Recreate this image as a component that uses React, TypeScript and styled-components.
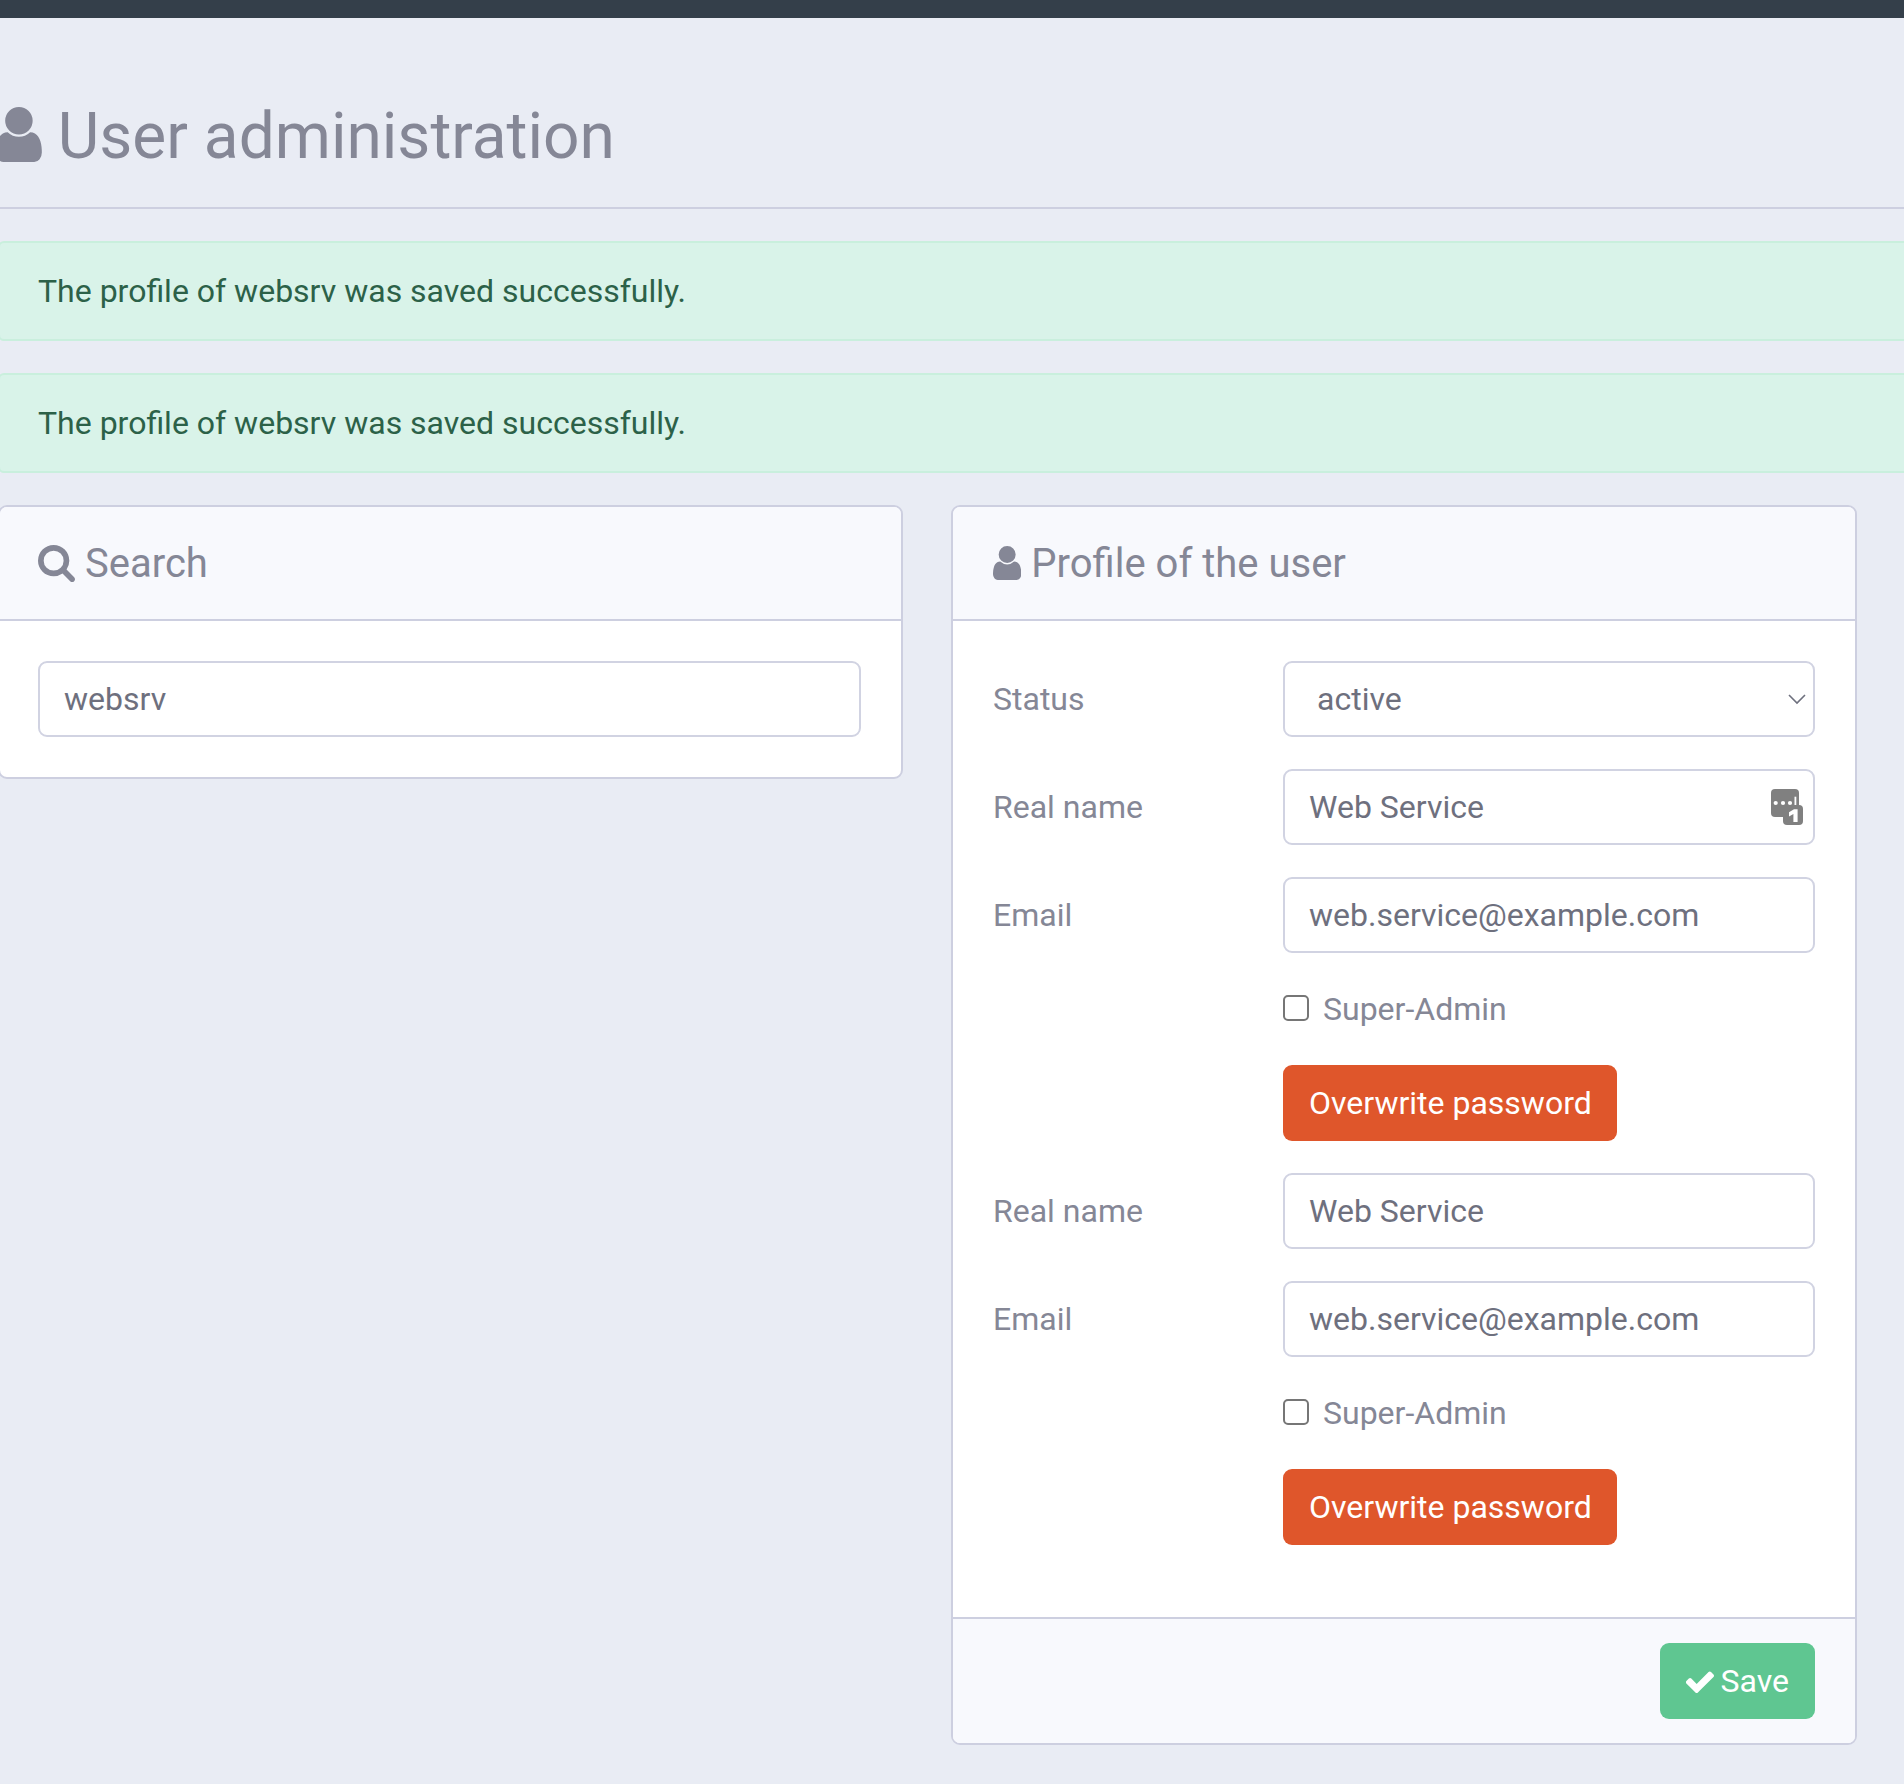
import React from "react";
import styled, { createGlobalStyle } from "styled-components";

const Global = createGlobalStyle`
  html, body { margin: 0; padding: 0; background: #e9ecf4; }
  body { font-family: Roboto, "Liberation Sans", sans-serif; overflow-x: hidden; }
  * { box-sizing: border-box; }
`;

const Page = styled.div`
  width: 1904px;
  height: 1784px;
  overflow: hidden;
  background: #e9ecf4;
`;

const TopBar = styled.div`
  height: 18px;
  background: #343f4a;
`;

const Main = styled.main`
  margin-left: -2px;
  width: 1930px;
`;

const TitleBlock = styled.header`
  height: 191px;
  padding: 88px 0 0;
  border-bottom: 2px solid #cdcfe0;
  display: flex;
  align-items: flex-start;
`;

const Title = styled.h1`
  margin: 0 0 0 -2px;
  display: flex;
  align-items: center;
  gap: 16px;
  height: 56px;
  font-size: 64px;
  line-height: 60px;
  font-weight: 400;
  color: #858796;
`;

const TitleText = styled.span`
  padding-top: 5px;
`;

const Alert = styled.div`
  margin-top: 32px;
  height: 100px;
  padding: 0 0 0 38px;
  display: flex;
  align-items: center;
  background: #d9f3e9;
  border: 2px solid #c9efdd;
  border-radius: 6px;
  color: #2c6148;
  font-size: 32px;
`;

const Columns = styled.div`
  margin-top: 32px;
  width: 1859px;
  display: grid;
  grid-template-columns: 905px 906px;
  gap: 48px;
  align-items: start;
`;

const Panel = styled.section`
  background: #fff;
  border: 2px solid #cdcfe0;
  border-radius: 9px;
  overflow: hidden;
`;

const PanelHead = styled.h2<{ $inset: number }>`
  margin: 0;
  height: 114px;
  padding: 0 40px 0 ${(p) => p.$inset}px;
  display: flex;
  align-items: center;
  gap: 10px;
  background: #f8f9fd;
  border-bottom: 2px solid #cdcfe0;
  font-size: 40px;
  font-weight: 400;
  color: #858796;
`;

const PanelBody = styled.div<{ $inset: number; $bottom: number }>`
  padding: 40px 40px ${(p) => p.$bottom}px ${(p) => p.$inset}px;
  display: flex;
  flex-direction: column;
  gap: 32px;
`;

const PanelFoot = styled.div`
  height: 126px;
  padding: 0 40px;
  display: flex;
  align-items: center;
  justify-content: flex-end;
  background: #f8f9fd;
  border-top: 2px solid #cdcfe0;
`;

const Row = styled.div`
  display: grid;
  grid-template-columns: 290px 532px;
  align-items: center;
`;

const Label = styled.label`
  font-size: 32px;
  color: #858796;
`;

const Input = styled.input`
  display: block;
  width: 100%;
  height: 76px;
  padding: 0 24px;
  border: 2px solid #d1d3e2;
  border-radius: 9px;
  background: #fff;
  color: #6e707e;
  font: 400 32px Roboto, sans-serif;
  outline: none;
`;

const FieldWrap = styled.div`
  position: relative;
`;

const Select = styled.select`
  display: block;
  width: 100%;
  height: 76px;
  padding: 0 24px 0 32px;
  border: 2px solid #d1d3e2;
  border-radius: 9px;
  background: #fff;
  color: #6e707e;
  font: 400 32px Roboto, sans-serif;
  outline: none;
  appearance: none;
`;

const Chevron = styled.svg`
  position: absolute;
  right: 9px;
  top: 33px;
  width: 18px;
  height: 11px;
`;

const ManagerIcon = styled.svg`
  position: absolute;
  right: 12px;
  top: 20px;
  width: 32px;
  height: 36px;
`;

const CheckRow = styled.label`
  margin-left: 290px;
  height: 48px;
  display: flex;
  align-items: center;
  gap: 14px;
  font-size: 32px;
  color: #858796;
`;

const Check = styled.input`
  appearance: none;
  margin: -3px 0 0;
  width: 26px;
  height: 26px;
  background: #fff;
  border: 2px solid #767676;
  border-radius: 5px;
  flex: none;
`;

const ButtonRow = styled.div`
  margin-left: 290px;
  display: flex;
`;

const Button = styled.button<{ $tone: string }>`
  height: 76px;
  padding: 0 25px 0 26px;
  display: inline-flex;
  align-items: center;
  gap: 7px;
  border: 0;
  border-radius: 9px;
  background: ${(p) => p.$tone};
  color: #fff;
  font: 400 32px Roboto, sans-serif;
`;

const SaveButton = styled(Button)`
  padding: 0 26px;
`;

const Icon = styled.svg<{ $size: number }>`
  width: ${(p) => p.$size}px;
  height: ${(p) => p.$size}px;
  fill: currentColor;
  flex: none;
`;

const USER =
  "M1536 1399q0 109-62.5 187t-150.5 78h-854q-88 0-150.5-78t-62.5-187q0-85 8.5-160.5t31.5-152 58.5-131 94-89 134.5-34.5q131 128 313 128t313-128q76 0 134.5 34.5t94 89 58.5 131 31.5 152 8.5 160.5zm-256-887q0 159-112.5 271.5t-271.5 112.5-271.5-112.5-112.5-271.5 112.5-271.5 271.5-112.5 271.5 112.5 112.5 271.5z";
const SEARCH =
  "M1216 832q0-185-131.5-316.5t-316.5-131.5-316.5 131.5-131.5 316.5 131.5 316.5 316.5 131.5 316.5-131.5 131.5-316.5zm512 832q0 52-38 90t-90 38q-54 0-90-38l-343-342q-179 124-399 124-143 0-273.5-55.5t-225-150-150-225-55.5-273.5 55.5-273.5 150-225 225-150 273.5-55.5 273.5 55.5 225 150 150 225 55.5 273.5q0 220-124 399l343 343q37 37 37 90z";
const CHECK =
  "M1671 566q0 40-28 68l-724 724-136 136q-28 28-68 28t-68-28l-136-136-362-362q-28-28-28-68t28-68l136-136q28-28 68-28t68 28l294 295 656-657q28-28 68-28t68 28l136 136q28 28 28 68z";

const UserIcon = styled.svg<{ $size: number }>`
  width: ${(p) => (p.$size * 1280) / 1536}px;
  height: ${(p) => p.$size}px;
  fill: currentColor;
  flex: none;
`;

const FaUser = ({ size }: { size: number }) => (
  <UserIcon $size={size} viewBox="256 128 1280 1536">
    <path d={USER} />
  </UserIcon>
);

const PersonForm = ({ manager }: { manager?: boolean }) => (
  <>
    <Row>
      <Label>Real name</Label>
      <FieldWrap>
        <Input defaultValue="Web Service" />
        {manager && (
          <ManagerIcon viewBox="0 0 32 36">
            <rect x="0" y="0" width="28" height="28" rx="4" fill="#808080" />
            <circle cx="4.7" cy="14" r="2.1" fill="#fff" />
            <circle cx="12" cy="14" r="2.1" fill="#fff" />
            <circle cx="19" cy="14" r="2.1" fill="#fff" />
            <rect x="23.5" y="7.7" width="1.8" height="9" fill="#fff" />
            <rect x="12" y="16" width="20" height="20" rx="4" fill="#808080" />
            <path d="M18 23.2l5-3h3.6v12.8h-4.2v-8l-4.4 2.4z" fill="#fff" />
          </ManagerIcon>
        )}
      </FieldWrap>
    </Row>
    <Row>
      <Label>Email</Label>
      <Input defaultValue="web.service@example.com" />
    </Row>
    <CheckRow>
      <Check type="checkbox" />
      Super-Admin
    </CheckRow>
    <ButtonRow>
      <Button $tone="#df562b">Overwrite password</Button>
    </ButtonRow>
  </>
);

export default function App() {
  return (
    <Page>
      <Global />
      <TopBar />
      <Main>
        <TitleBlock>
          <Title>
            <FaUser size={55} />
            <TitleText>User administration</TitleText>
          </Title>
        </TitleBlock>
        <Alert>The profile of websrv was saved successfully.</Alert>
        <Alert>The profile of websrv was saved successfully.</Alert>
        <Columns>
          <Panel>
            <PanelHead $inset={38}>
              <Icon $size={37} viewBox="64 128 1664 1664">
                <path d={SEARCH} />
              </Icon>
              Search
            </PanelHead>
            <PanelBody $inset={38} $bottom={40}>
              <Input defaultValue="websrv" />
            </PanelBody>
          </Panel>
          <Panel>
            <PanelHead $inset={40}>
              <FaUser size={34} />
              Profile of the user
            </PanelHead>
            <PanelBody $inset={40} $bottom={72}>
              <Row>
                <Label>Status</Label>
                <FieldWrap>
                  <Select defaultValue="active">
                    <option>active</option>
                  </Select>
                  <Chevron viewBox="0 0 18 11">
                    <path d="M1 1l8 8 8-8" fill="none" stroke="#6e707e" strokeWidth="1.6" />
                  </Chevron>
                </FieldWrap>
              </Row>
              <PersonForm manager />
              <PersonForm />
            </PanelBody>
            <PanelFoot>
              <SaveButton $tone="#5fc691">
                <Icon $size={28} viewBox="128 256 1543 1200">
                  <path d={CHECK} />
                </Icon>
                Save
              </SaveButton>
            </PanelFoot>
          </Panel>
        </Columns>
      </Main>
    </Page>
  );
}
